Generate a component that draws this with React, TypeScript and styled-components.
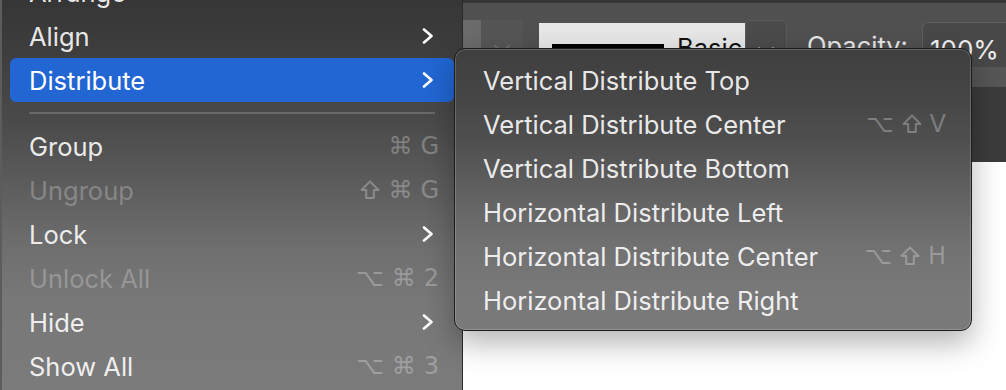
import React from "react";
import styled, { createGlobalStyle } from "styled-components";

const GlobalStyle = createGlobalStyle`
  html, body {
    margin: 0;
    padding: 0;
    background: #ffffff;
    overflow: hidden;
  }
  body {
    font-family: Inter, "Liberation Sans", sans-serif;
    -webkit-font-smoothing: antialiased;
  }
`;

type Entry =
  | { kind: "item"; label: string; submenu?: boolean; keys?: string[]; disabled?: boolean; active?: boolean }
  | { kind: "separator" };

const mainEntries: Entry[] = [
  { kind: "item", label: "Arrange", submenu: true },
  { kind: "item", label: "Align", submenu: true },
  { kind: "item", label: "Distribute", submenu: true, active: true },
  { kind: "separator" },
  { kind: "item", label: "Group", keys: ["⌘", "G"] },
  { kind: "item", label: "Ungroup", keys: ["⇧", "⌘", "G"], disabled: true },
  { kind: "item", label: "Lock", submenu: true },
  { kind: "item", label: "Unlock All", keys: ["⌥", "⌘", "2"], disabled: true },
  { kind: "item", label: "Hide", submenu: true },
  { kind: "item", label: "Show All", keys: ["⌥", "⌘", "3"] },
];

const subEntries: { label: string; keys?: string[] }[] = [
  { label: "Vertical Distribute Top" },
  { label: "Vertical Distribute Center", keys: ["⌥", "⇧", "V"] },
  { label: "Vertical Distribute Bottom" },
  { label: "Horizontal Distribute Left" },
  { label: "Horizontal Distribute Center", keys: ["⌥", "⇧", "H"] },
  { label: "Horizontal Distribute Right" },
];

const Chevron = () => (
  <ChevronIcon viewBox="0 0 12 16" width={12} height={16}>
    <polyline points="2,1.5 9.5,8 2,14.5" fill="none" stroke="currentColor" strokeWidth="2.6" strokeLinecap="round" strokeLinejoin="round" />
  </ChevronIcon>
);

// the shift key glyph, drawn as an outlined arrow
const ShiftGlyph = () => (
  <ShiftIcon viewBox="0 0 20 20" width={20} height={20} aria-label="⇧">
    <path d="M10 1.5 L18.5 10 H13.8 V18 H6.2 V10 H1.5 Z" fill="none" stroke="currentColor" strokeWidth="2" strokeLinejoin="round" />
  </ShiftIcon>
);

const Caret = ({ light }: { light?: boolean }) => (
  <CaretIcon viewBox="0 0 18 10" width={18} height={10} $light={light}>
    <polyline points="2,2 9,8 16,2" fill="none" stroke="currentColor" strokeWidth="2" strokeLinecap="round" />
  </CaretIcon>
);

const Keys = ({ keys }: { keys: string[] }) => (
  <Shortcut>
    {keys.map((k, j) => (k === "⇧" ? <ShiftGlyph key={j} /> : <Key key={j}>{k}</Key>))}
  </Shortcut>
);

const App = () => {
  return (
    <Screen>
      <GlobalStyle />
      <MainMenu>
        <MenuList>
          {mainEntries.map((e, i) =>
            e.kind === "separator" ? (
              <Separator key={i} />
            ) : (
              <Item key={i} $active={e.active} $disabled={e.disabled}>
                <Label>{e.label}</Label>
                {e.keys && <Keys keys={e.keys} />}
                {e.submenu && <Chevron />}
              </Item>
            ),
          )}
        </MenuList>
      </MainMenu>

      <Workspace>
        <Toolbar>
          <SideStripe />
          <SmallDrop>
            <Caret />
          </SmallDrop>
          <StrokeBox>
            <StrokeLine />
            <StrokeName>Basic</StrokeName>
          </StrokeBox>
          <DropButton>
            <Caret light />
          </DropButton>
          <OpacityLabel>Opacity:</OpacityLabel>
          <OpacityInput>100%</OpacityInput>
        </Toolbar>
        <ControlBand />
        <DarkPanel />
        <Canvas />
      </Workspace>

      <SubMenu>
        {subEntries.map((e, i) => (
          <SubItem key={i}>
            <Label>{e.label}</Label>
            {e.keys && <Keys keys={e.keys} />}
          </SubItem>
        ))}
      </SubMenu>
    </Screen>
  );
};

const Screen = styled.div`
  position: relative;
  display: flex;
  width: 1006px;
  height: 390px;
  overflow: hidden;
  background: #ffffff;
`;

const MainMenu = styled.div`
  flex: 0 0 463px;
  height: 100%;
  overflow: hidden;
  box-sizing: border-box;
  border-left: 2px solid #5c5c5c;
  border-right: 1px solid #2a2a2a;
  background: linear-gradient(180deg, #363636 0%, #3f3f3f 15%, #4b4b4b 32%, #5d5d5d 48%, #6f6f6f 64%, #787878 78%, #7b7b7b 100%);
`;

const MenuList = styled.div`
  display: flex;
  flex-direction: column;
  margin-top: -30px;
  padding: 0 8px 0 8px;
`;

const Item = styled.div<{ $active?: boolean; $disabled?: boolean }>`
  display: flex;
  align-items: center;
  height: 44px;
  padding: 0 20px 0 19px;
  border-radius: 6px;
  font-size: 25.5px;
  color: ${(p) => (p.$disabled ? "rgba(255, 255, 255, 0.26)" : "rgba(255, 255, 255, 0.9)")};
  background: ${(p) => (p.$active ? "#2166d3" : "transparent")};
  ${(p) => p.$active && "color: #ffffff;"}
`;

const Label = styled.span`
  flex: 1;
  white-space: nowrap;
`;

const Shortcut = styled.span`
  display: flex;
  align-items: center;
  gap: 8px;
  margin-right: -5px;
  color: rgba(255, 255, 255, 0.28);
  font-family: "DejaVu Sans", "Liberation Sans", sans-serif;
  font-size: 24px;
`;

const Key = styled.span`
  display: inline-block;
  text-align: center;
`;

const ShiftIcon = styled.svg`
  flex: none;
  color: inherit;
`;

const ChevronIcon = styled.svg`
  flex: none;
  color: #ffffff;
`;

const Separator = styled.div`
  height: 2px;
  margin: 10px 19px 10px 19px;
  background: rgba(255, 255, 255, 0.18);
`;

const Workspace = styled.div`
  flex: 1;
  display: flex;
  flex-direction: column;
`;

const Toolbar = styled.div`
  display: flex;
  align-items: flex-start;
  height: 67px;
  box-sizing: border-box;
  padding-top: 17px;
  border-top: 3px solid #363636;
  background: #505050;
  overflow: hidden;
`;

const SideStripe = styled.div`
  width: 18px;
  height: 60px;
  background: #6b6b6b;
`;

const SmallDrop = styled.div`
  display: flex;
  justify-content: center;
  width: 42px;
  height: 60px;
  padding-top: 24px;
  box-sizing: border-box;
  background: #555555;
  border-radius: 3px;
`;

const CaretIcon = styled.svg<{ $light?: boolean }>`
  color: ${(p) => (p.$light ? "#a8a8a8" : "#6e6e6e")};
`;

const StrokeBox = styled.div`
  display: flex;
  align-items: flex-start;
  margin-left: 16px;
  margin-top: 3px;
  width: 206px;
  height: 60px;
  box-sizing: border-box;
  padding: 12px 0 0 13px;
  background: #e6e6e6;
`;

const StrokeLine = styled.div`
  width: 112px;
  height: 6px;
  margin-top: 9px;
  background: #000000;
`;

const StrokeName = styled.span`
  margin-left: 13px;
  font-size: 25.5px;
  color: #111111;
  line-height: 1;
`;

const DropButton = styled.div`
  display: flex;
  justify-content: center;
  width: 42px;
  height: 60px;
  padding-top: 25px;
  box-sizing: border-box;
  background: #4b4b4b;
  border: 1px solid #5a5a5a;
  border-radius: 4px;
`;

const OpacityLabel = styled.span`
  margin: 13px 0 0 20px;
  font-size: 25.5px;
  line-height: 1;
  color: #e6e6e6;
`;

const OpacityInput = styled.div`
  margin-left: 14px;
  margin-top: 2px;
  flex: 1;
  height: 60px;
  box-sizing: border-box;
  padding: 14px 0 0 7px;
  font-size: 26px;
  line-height: 1;
  color: #f0f0f0;
  background: #484848;
  border: 1px solid #5e5e5e;
  border-right: none;
  border-radius: 6px 0 0 6px;
`;

const ControlBand = styled.div`
  height: 20px;
  background: #565656;
`;

const DarkPanel = styled.div`
  height: 75px;
  background: #3b3b3b;
`;

const Canvas = styled.div`
  flex: 1;
  background: #ffffff;
`;

const SubMenu = styled.div`
  position: absolute;
  left: 454px;
  top: 48px;
  width: 518px;
  height: 283px;
  box-sizing: border-box;
  padding: 9px 0 0 0;
  display: flex;
  flex-direction: column;
  border-radius: 11px;
  border: 1px solid #1c1c1c;
  background: linear-gradient(180deg, #3f3f3f 0%, #464646 18%, #505050 34%, #626262 52%, #717171 70%, #787878 85%, #7a7a7a 100%);
  box-shadow: inset 0 0 0 1px rgba(255, 255, 255, 0.18), 0 12px 30px rgba(0, 0, 0, 0.3);
`;

const SubItem = styled.div`
  display: flex;
  align-items: center;
  height: 44px;
  padding: 0 30px 0 28px;
  font-size: 25.5px;
  color: rgba(255, 255, 255, 0.9);
`;

export default App;
